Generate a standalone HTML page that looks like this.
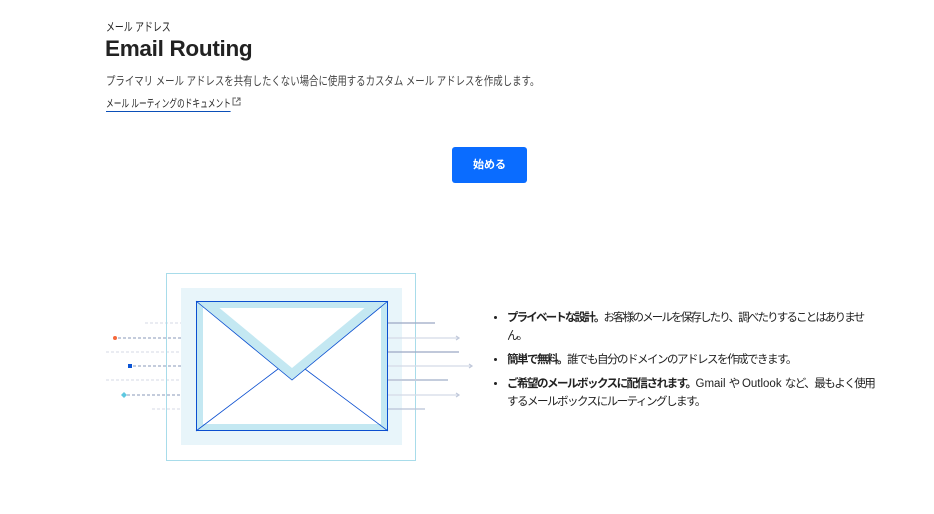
<!DOCTYPE html>
<html><head><meta charset="utf-8"><style>
body{margin:0;width:934px;height:514px;background:#fff;font-family:"Liberation Sans","Noto Sans CJK JP",sans-serif;color:#313131;position:relative;overflow:hidden}
.a{position:absolute;white-space:nowrap;transform-origin:0 0}
ul{position:absolute;left:494px;top:309px;margin:0;padding:0 0 0 13px;width:368px;font-size:11.5px;line-height:18px;color:#222;letter-spacing:-1.5px}
li{margin-bottom:6px}
.l{letter-spacing:0}
</style></head><body>
<div class="a" style="left:106px;top:18px;font-size:12px;color:#222;transform:scaleX(0.74)">メール アドレス</div>
<div class="a" style="left:105px;top:36px;font-size:22.5px;font-weight:bold;color:#222;letter-spacing:-0.3px">Email Routing</div>
<div class="a" style="left:106px;top:72px;font-size:12px;color:#444;transform:scaleX(0.785)">プライマリ メール アドレスを共有したくない場合に使用するカスタム メール アドレスを作成します。</div>
<div class="a" style="left:106px;top:95px;font-size:11px;color:#222;border-bottom:1.4px solid #0b4fb8;transform:scaleX(0.7)">メール ルーティングのドキュメント</div>
<svg class="a" style="left:232px;top:97px" width="9" height="9" viewBox="0 0 9 9"><path d="M4 1H1v7h7V5M5 1h3v3M8 1L4 5" fill="none" stroke="#666" stroke-width="1"/></svg>
<div class="a" style="left:452px;top:147px;width:75px;height:36px;background:#0a6cff;border-radius:3px;color:#fff;font-size:11px;font-weight:bold;text-align:center;line-height:36px">始める</div>
<svg class="a" style="left:0;top:0" width="480" height="480">
<g stroke-dasharray="3 2" stroke-width="1">
<line x1="145" y1="323" x2="196" y2="323" stroke="#d4dae6"/>
<line x1="118" y1="338" x2="196" y2="338" stroke="#8a9ab8"/>
<line x1="106" y1="352" x2="196" y2="352" stroke="#d4dae6"/>
<line x1="133" y1="366" x2="196" y2="366" stroke="#8a9ab8"/>
<line x1="106" y1="380" x2="196" y2="380" stroke="#d4dae6"/>
<line x1="127" y1="395" x2="196" y2="395" stroke="#8a9ab8"/>
<line x1="152" y1="409" x2="196" y2="409" stroke="#d4dae6"/>
</g>
<circle cx="115" cy="338" r="2" fill="#f5683a"/>
<rect x="128" y="364" width="4" height="4" fill="#0b55d6"/>
<path d="M124 392l3 3-3 3-3-3z" fill="#5ec8e0"/>
<rect x="166.5" y="273.5" width="249" height="187" fill="none" stroke="#a8dcea"/>
<rect x="181" y="288" width="221" height="157" fill="#e8f5fa"/>
<g stroke-width="1.2">
<line x1="388" y1="323" x2="435" y2="323" stroke="#9aa8c4"/>
<line x1="388" y1="338" x2="458" y2="338" stroke="#d4dbe8"/><path d="M456 336l3 2-3 2" fill="none" stroke="#c0c8da"/>
<line x1="388" y1="352" x2="459" y2="352" stroke="#9aa8c4"/>
<line x1="388" y1="366" x2="471" y2="366" stroke="#d4dbe8"/><path d="M469 364l3 2-3 2" fill="none" stroke="#c0c8da"/>
<line x1="388" y1="380" x2="448" y2="380" stroke="#c4cddd" stroke-width="2"/>
<line x1="388" y1="395" x2="458" y2="395" stroke="#d4dbe8"/><path d="M456 393l3 2-3 2" fill="none" stroke="#c0c8da"/>
<line x1="388" y1="409" x2="425" y2="409" stroke="#b8c2d6"/>
</g>
<rect x="196" y="301" width="192" height="130" fill="#fff"/>
<path d="M196 301h192v130H196zM203 308v116h178V308z" fill="#c4e8f2" fill-rule="evenodd"/>
<path d="M196 301L292 380 388 301h-15L292 368 211 301z" fill="#c4e8f2"/>
<rect x="196.5" y="301.5" width="191" height="129" fill="none" stroke="#0b4fd0"/>
<path d="M196 301L292 380 388 301M196 431L278 369M388 431L305 369" fill="none" stroke="#0b4fd0" stroke-width="0.8"/>
</svg>
<ul>
<li style="letter-spacing:-1.85px"><b>プライベートな設計。</b>お客様のメールを保存したり、調べたりすることはありません。</li>
<li><b>簡単で無料。</b>誰でも自分のドメインのアドレスを作成できます。</li>
<li><b>ご希望のメールボックスに配信されます。</b><span class="l">Gmail </span>や<span class="l"> Outlook </span>など、最もよく使用するメールボックスにルーティングします。</li>
</ul>
</body></html>
